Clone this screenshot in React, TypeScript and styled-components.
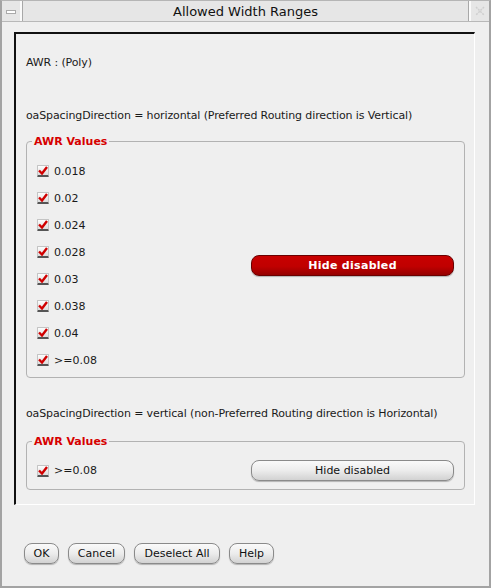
import React from "react";
import styled, { createGlobalStyle } from "styled-components";

const Global = createGlobalStyle`
  html, body { margin: 0; padding: 0; background: #efefef; }
  * { box-sizing: border-box; }
`;

const Window = styled.div`
  width: 491px;
  height: 588px;
  background: #efefef;
  border: 2px solid #a3a3a3;
  border-top: 1px solid #b5b5b5;
  display: flex;
  flex-direction: column;
  font-family: "DejaVu Sans", sans-serif;
  font-size: 11px;
  color: #1a1a1a;
`;

const TitleBar = styled.div`
  height: 21px;
  display: flex;
  border-bottom: 1px solid #b8b8b8;
  background: #e6e6e6;
`;

const TitleBtn = styled.div<{ $side: "left" | "right" }>`
  width: 20px;
  height: 20px;
  display: flex;
  align-items: center;
  justify-content: center;
  background: #e6e6e6;
  border-${(p) => (p.$side === "left" ? "right" : "left")}: 2px solid #fafafa;
  box-shadow: ${(p) => (p.$side === "left" ? "1px 0 0 #a8a8a8" : "-1px 0 0 #a8a8a8")};
`;

const MinGlyph = styled.div`
  width: 10px;
  height: 4px;
  background: #fff;
  border: 1px solid #aaa;
  margin-top: 2px;
`;

const Title = styled.div`
  flex: 1;
  text-align: center;
  line-height: 21px;
  font-size: 13px;
  color: #111;
`;

const Body = styled.div`
  flex: 1;
  padding: 10px 14px 0 12px;
  display: flex;
  flex-direction: column;
`;

const Panel = styled.div`
  height: 473px;
  border-top: 2px solid #111;
  border-left: 2px solid #111;
  border-right: 1px solid #fff;
  border-bottom: 1px solid #fff;
  padding: 22px 9px 0 10px;
  display: flex;
  flex-direction: column;
`;

const Line = styled.div<{ $mt?: number }>`
  margin-top: ${(p) => p.$mt ?? 0}px;
  height: 14px;
  line-height: 14px;
  white-space: nowrap;
  letter-spacing: -0.12px;
`;

const Group = styled.fieldset<{ $mt: number }>`
  margin: ${(p) => p.$mt}px 0 0 0;
  padding: 0 10px;
  border: 1px solid #b2b2b2;
  border-radius: 4px;
  min-width: 0;
`;

const Legend = styled.legend`
  padding: 0 2px;
  margin-left: -5px;
  color: #d60000;
  font-weight: bold;
  font-size: 11px;
  line-height: 13px;
`;

const GroupBody = styled.div<{ $pt: number; $pb: number }>`
  display: flex;
  align-items: center;
  padding: ${(p) => p.$pt}px 0 ${(p) => p.$pb}px;
`;

const Column = styled.div`
  display: flex;
  flex-direction: column;
  gap: 13px;
  width: 214px;
`;

const CheckRow = styled.label`
  display: flex;
  align-items: center;
  gap: 5px;
  height: 14px;
`;

const Box = styled.span`
  width: 12px;
  height: 12px;
  display: inline-flex;
  align-items: center;
  justify-content: center;
  background: linear-gradient(#fdfdfd, #dcdcdc);
  border: 1px solid #c4c4c4;
  border-bottom: 2px solid #555;
  border-radius: 1px;
`;

const Pill = styled.button<{ $red?: boolean }>`
  width: 203px;
  height: 21px;
  border-radius: 8px;
  font-family: "DejaVu Sans", sans-serif;
  font-size: 11px;
  padding: 0;
  cursor: default;
  border: 1px solid ${(p) => (p.$red ? "#6a0000" : "#8a8a8a")};
  color: ${(p) => (p.$red ? "#fff" : "#111")};
  font-weight: ${(p) => (p.$red ? "bold" : "normal")};
  letter-spacing: ${(p) => (p.$red ? "0.3px" : "0")};
  background: ${(p) =>
    p.$red
      ? "linear-gradient(#c80000, #c00000 55%, #950000)"
      : "linear-gradient(#fafafa, #ececec 50%, #d2d2d2)"};
  box-shadow: 0 1px 1px rgba(0, 0, 0, 0.25);
`;

const Footer = styled.div`
  display: flex;
  gap: 9px;
  padding: 38px 0 0 10px;
`;

const FootBtn = styled.button<{ $w: number }>`
  width: ${(p) => p.$w}px;
  height: 21px;
  border-radius: 8px;
  border: 1px solid #8a8a8a;
  background: linear-gradient(#fafafa, #ececec 50%, #d2d2d2);
  box-shadow: 0 1px 1px rgba(0, 0, 0, 0.25);
  font-family: "DejaVu Sans", sans-serif;
  font-size: 11px;
  color: #111;
  padding: 0;
`;

const Check = () => (
  <Box>
    <svg width="10" height="9" viewBox="0 0 10 9">
      <path d="M1 4.5 L4 7.5 L9 1" fill="none" stroke="#d00000" strokeWidth="2.4" />
    </svg>
  </Box>
);

const values = ["0.018", "0.02", "0.024", "0.028", "0.03", "0.038", "0.04", ">=0.08"];

export default function App() {
  return (
    <>
      <Global />
      <Window>
        <TitleBar>
          <TitleBtn $side="left">
            <MinGlyph />
          </TitleBtn>
          <Title>Allowed Width Ranges</Title>
          <TitleBtn $side="right">
            <svg width="10" height="10" viewBox="0 0 10 10">
              <path d="M1 1 L9 9 M9 1 L1 9" stroke="#cfcfcf" strokeWidth="1.5" strokeDasharray="2 1" />
            </svg>
          </TitleBtn>
        </TitleBar>
        <Body>
          <Panel>
            <Line>AWR : (Poly)</Line>
            <Line $mt={39}>oaSpacingDirection = horizontal (Preferred Routing direction is Vertical)</Line>
            <Group $mt={12}>
              <Legend>AWR Values</Legend>
              <GroupBody $pt={16} $pb={10}>
                <Column>
                  {values.map((v) => (
                    <CheckRow key={v}>
                      <Check />
                      {v}
                    </CheckRow>
                  ))}
                </Column>
                <Pill $red>Hide disabled</Pill>
              </GroupBody>
            </Group>
            <Line $mt={29}>oaSpacingDirection = vertical (non-Preferred Routing direction is Horizontal)</Line>
            <Group $mt={14}>
              <Legend>AWR Values</Legend>
              <GroupBody $pt={12} $pb={8}>
                <Column>
                  <CheckRow>
                    <Check />
                    {">=0.08"}
                  </CheckRow>
                </Column>
                <Pill>Hide disabled</Pill>
              </GroupBody>
            </Group>
          </Panel>
          <Footer>
            <FootBtn $w={35}>OK</FootBtn>
            <FootBtn $w={57}>Cancel</FootBtn>
            <FootBtn $w={86}>Deselect All</FootBtn>
            <FootBtn $w={45}>Help</FootBtn>
          </Footer>
        </Body>
      </Window>
    </>
  );
}
